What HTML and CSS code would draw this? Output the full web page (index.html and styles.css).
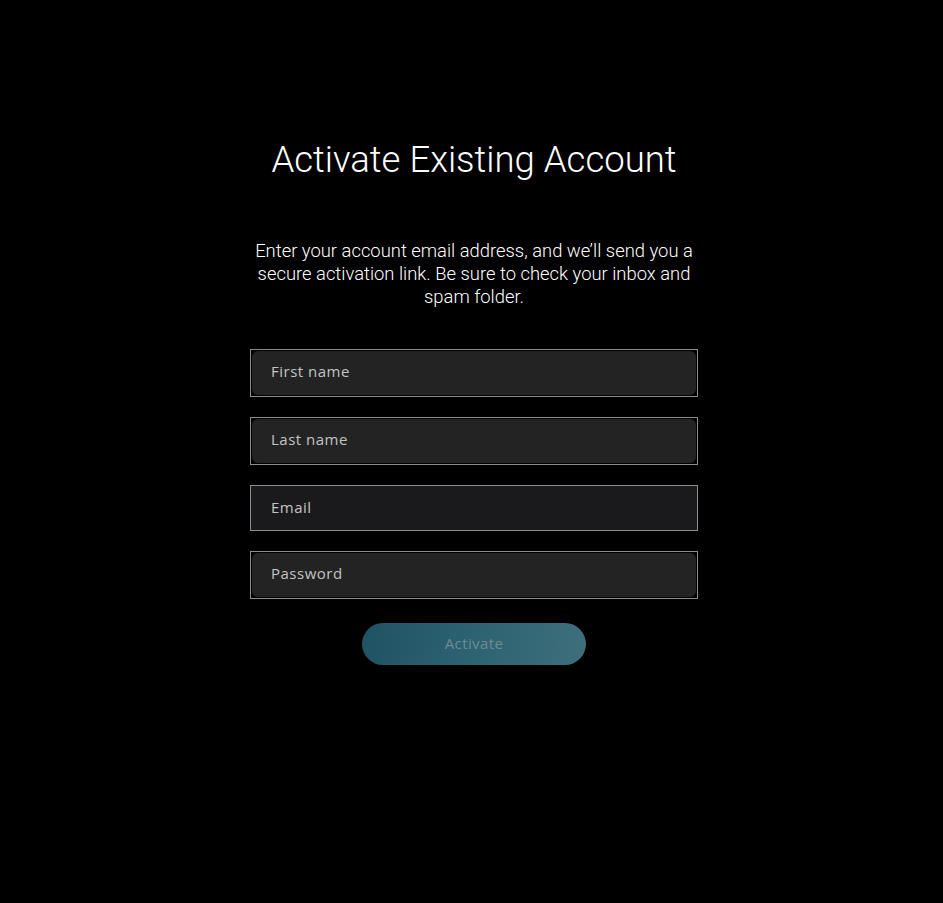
FILE: index.html
```html
<!DOCTYPE html>
<html lang="en">
<head>
<meta charset="utf-8">
<title>Activate Existing Account</title>
<link rel="stylesheet" href="styles.css">
</head>
<body>
<main class="page">
  <section class="card">
    <h1 class="title">Activate Existing Account</h1>
    <p class="intro">Enter your account email address, and we’ll send you a secure activation link. Be sure to check your inbox and spam folder.</p>
    <form class="form">
      <div class="field"><input class="input" type="text" placeholder="First name"></div>
      <div class="field"><input class="input" type="text" placeholder="Last name"></div>
      <div class="field field-plain"><input class="input input-plain" type="email" placeholder="Email"></div>
      <div class="field"><input class="input" type="password" placeholder="Password"></div>
      <button class="btn" type="button">Activate</button>
    </form>
  </section>
</main>
</body>
</html>
```
FILE: styles.css
```css
html, body {
  margin: 0;
  padding: 0;
  background: #000;
}
body {
  min-height: 903px;
}
.page {
  display: flex;
  justify-content: center;
  padding-left: 5px;
  padding-top: 138px;
}
.card {
  width: 448px;
  display: flex;
  flex-direction: column;
  align-items: center;
}
.title {
  margin: 0;
  font-family: Roboto, "Liberation Sans", sans-serif;
  font-weight: 300;
  font-size: 36.5px;
  line-height: 44px;
  color: #fff;
  text-align: center;
  white-space: nowrap;
}
.intro {
  margin: 57px 0 0;
  font-family: Roboto, "Liberation Sans", sans-serif;
  font-weight: 300;
  font-size: 18.4px;
  line-height: 23px;
  color: #fff;
  text-align: center;
  width: 448px;
}
.form {
  margin-top: 41px;
  width: 448px;
  display: flex;
  flex-direction: column;
  align-items: center;
}
.field {
  box-sizing: border-box;
  width: 448px;
  height: 48px;
  border: 1px solid #8c8c8c;
  padding: 1px;
  margin-bottom: 20px;
  display: flex;
}
.field-plain {
  height: 46px;
  padding: 0;
  background: #1a1a1c;
}
.input {
  flex: 1;
  box-sizing: border-box;
  border: 0;
  outline: none;
  border-radius: 6px;
  background: #232323;
  padding: 0 0 4px 19px;
  font-family: "Open Sans", "Noto Sans", sans-serif;
  font-size: 15px;
  font-weight: 500;
  letter-spacing: 0.5px;
  color: #ccc;
}
.input-plain {
  background: transparent;
  padding: 0 0 2px 20px;
}
.input::placeholder {
  color: #c4c4c4;
  opacity: 1;
}
.btn {
  margin-top: 4px;
  width: 224px;
  height: 42px;
  border: 0;
  border-radius: 21px;
  padding: 0 0 2px;
  background: linear-gradient(100deg, #1f5364 0%, #2f6473 55%, #3e6f7b 100%);
  font-family: "Open Sans", "Noto Sans", sans-serif;
  font-size: 15px;
  font-weight: 500;
  letter-spacing: 0.4px;
  color: #6d8b93;
  cursor: pointer;
}
```
